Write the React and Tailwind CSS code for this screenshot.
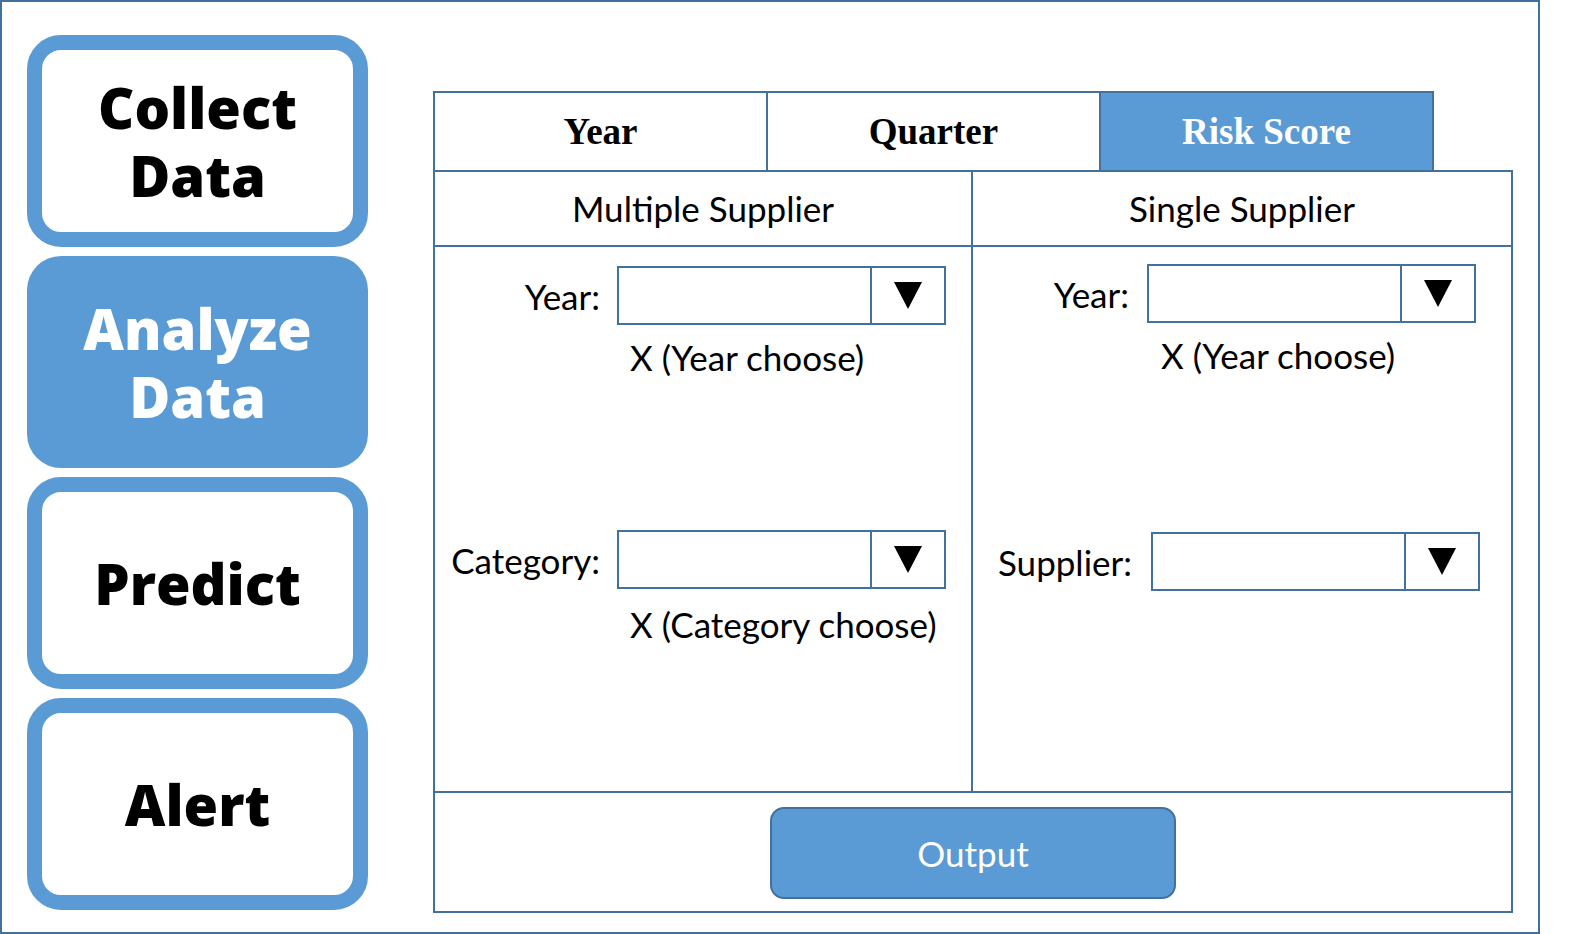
const navItems = [
  { label: ['Collect', 'Data'], active: false },
  { label: ['Analyze', 'Data'], active: true },
  { label: ['Predict'], active: false },
  { label: ['Alert'], active: false },
]

const tabs = [
  { name: 'Year', active: false },
  { name: 'Quarter', active: false },
  { name: 'Risk Score', active: true },
]

function Arrow() {
  return (
    <svg width="28" height="27" viewBox="0 0 28 27">
      <polygon points="0,0 28,0 14,27" fill="#000" />
    </svg>
  )
}

function Dropdown() {
  return (
    <div className="flex w-[329px] h-[59px] border-2 border-[#41719c] bg-white">
      <div className="flex-1" />
      <div className="w-[74px] border-l-2 border-[#41719c] flex items-center justify-center">
        <Arrow />
      </div>
    </div>
  )
}

function Field({ label, labelWidth, gap }) {
  return (
    <div className="flex items-center">
      <div className="text-right text-[35px] leading-[44px] whitespace-nowrap" style={{ width: labelWidth, marginRight: gap }}>
        {label}
      </div>
      <Dropdown />
    </div>
  )
}

export default function App() {
  return (
    <div className="w-[1594px] h-[934px] bg-white" style={{ fontFamily: 'Lato, "Open Sans", sans-serif' }}>
      <div className="w-[1540px] h-[934px] border-2 border-[#41719c] flex">
        {/* sidebar */}
        <div className="pl-[25px] pt-[33px] flex flex-col gap-[9px]">
          {navItems.map((item) => (
            <div
              key={item.label.join(' ')}
              className={`w-[341px] h-[212px] rounded-[34px] flex flex-col items-center justify-center ${
                item.active ? 'bg-[#5b9bd5] text-white' : 'border-[15px] border-[#5b9bd5] text-black'
              }`}
              style={{ fontFamily: '"Open Sans", sans-serif' }}
            >
              {item.label.map((l) => (
                <div key={l} className="text-[56px] font-extrabold leading-[68px]">{l}</div>
              ))}
            </div>
          ))}
        </div>

        {/* main panel */}
        <div className="ml-[65px] pt-[89px]">
          <div className="flex">
            {tabs.map((t, i) => (
              <div
                key={t.name}
                className={`w-[335px] h-[79px] border-2 border-b-0 border-[#41719c] flex items-center justify-center text-[37px] font-bold ${
                  i > 0 ? '-ml-[2px]' : ''
                } ${t.active ? 'bg-[#5b9bd5] text-white' : 'bg-white text-black'}`}
                style={{ fontFamily: '"Liberation Serif", serif' }}
              >
                {t.name}
              </div>
            ))}
          </div>

          <div className="w-[1080px] h-[743px] border-2 border-[#41719c] flex flex-col">
            <div className="flex h-[619px]">
              {/* multiple supplier */}
              <div className="w-[538px] border-r-2 border-[#41719c] flex flex-col">
                <div className="h-[75px] border-b-2 border-[#41719c] flex items-center justify-center text-[35px]">
                  Multiple Supplier
                </div>
                <div className="flex flex-col">
                  <div className="mt-[19px]">
                    <Field label="Year:" labelWidth={165} gap={17} />
                  </div>
                  <div className="ml-[195px] mt-[10px] text-[35px] leading-[44px]">X (Year choose)</div>
                  <div className="mt-[151px]">
                    <Field label="Category:" labelWidth={165} gap={17} />
                  </div>
                  <div className="ml-[195px] mt-[13px] text-[35px] leading-[44px]">X (Category choose)</div>
                </div>
              </div>

              {/* single supplier */}
              <div className="flex-1 flex flex-col">
                <div className="h-[75px] border-b-2 border-[#41719c] flex items-center justify-center text-[35px]">
                  Single Supplier
                </div>
                <div className="flex flex-col">
                  <div className="mt-[17px]">
                    <Field label="Year:" labelWidth={156} gap={18} />
                  </div>
                  <div className="ml-[188px] mt-[10px] text-[35px] leading-[44px]">X (Year choose)</div>
                  <div className="mt-[155px]">
                    <Field label="Supplier:" labelWidth={159} gap={19} />
                  </div>
                </div>
              </div>
            </div>

            <div className="flex-1 border-t-2 border-[#41719c] flex items-center justify-center">
              <button className="w-[406px] h-[92px] rounded-[14px] border-2 border-[#41719c] bg-[#5b9bd5] text-white text-[35px] mt-[2px]">
                Output
              </button>
            </div>
          </div>
        </div>
      </div>
    </div>
  )
}
